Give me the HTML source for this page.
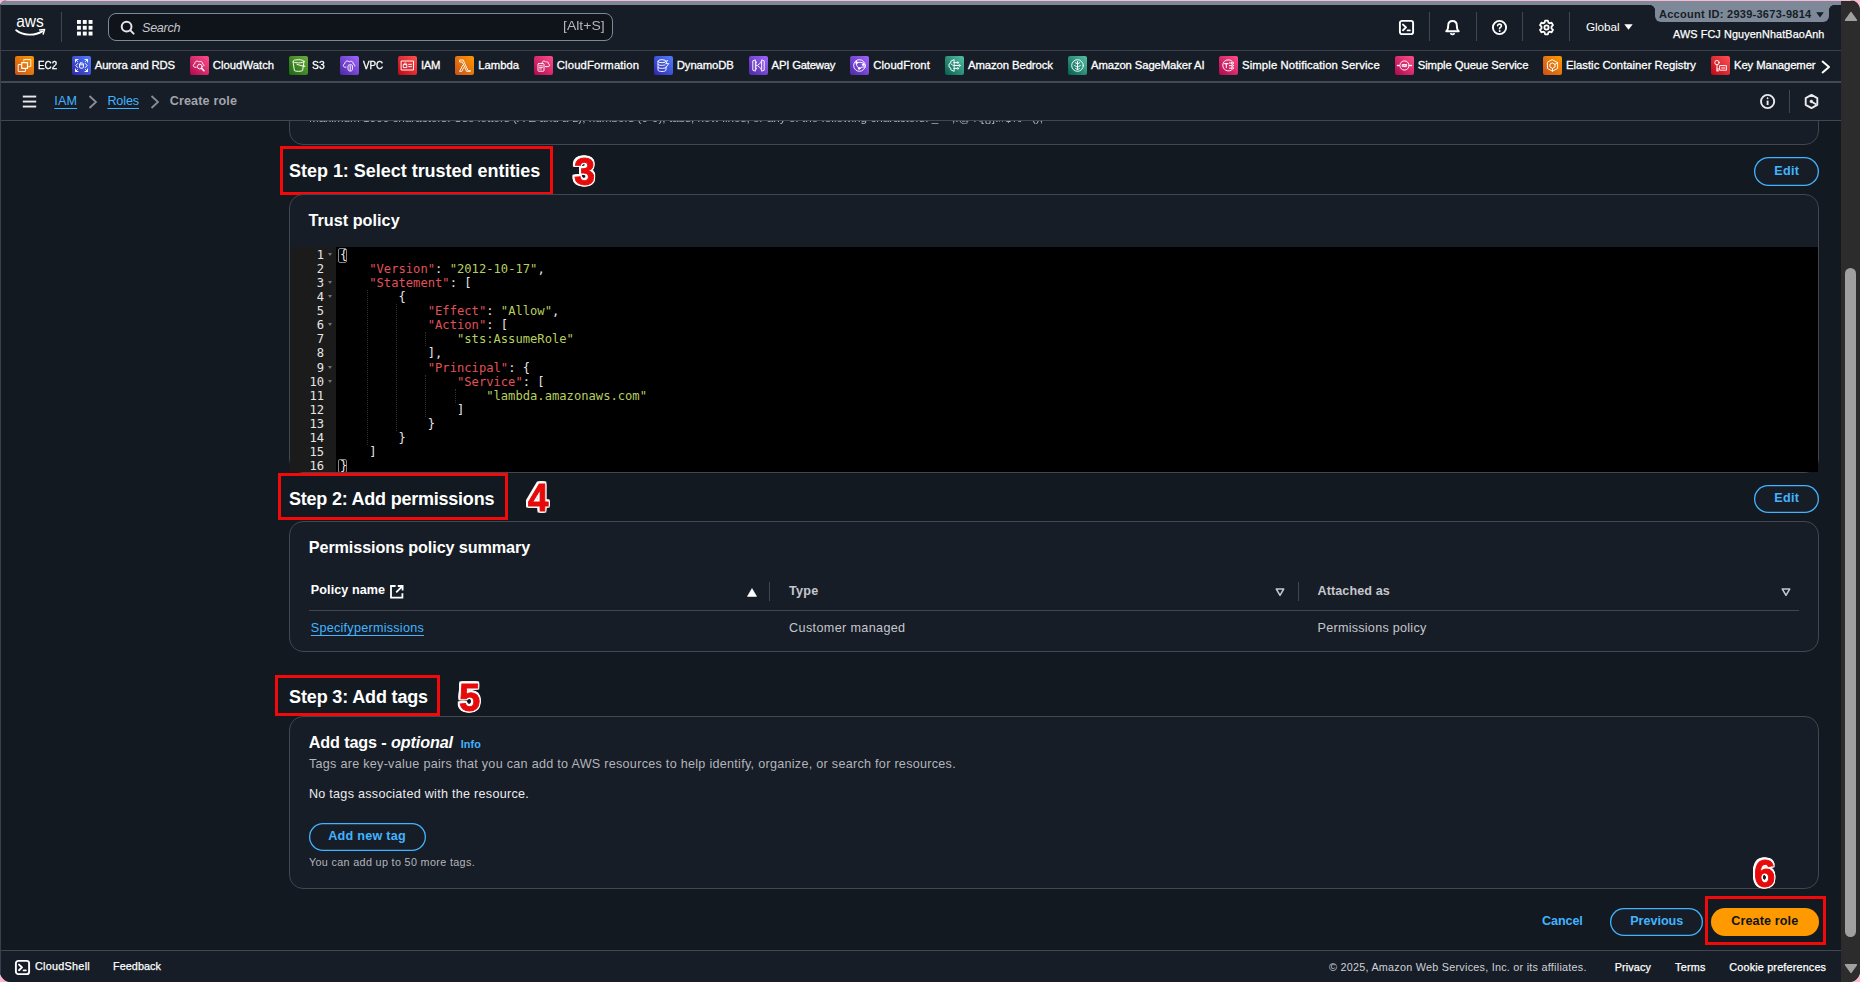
<!DOCTYPE html>
<html lang="en">
<head>
<meta charset="utf-8">
<title>Create role | IAM | Global</title>
<style>
*{box-sizing:border-box;margin:0;padding:0}
html,body{width:1860px;height:982px;overflow:hidden;background:#fab9d2}
body{font-family:"Liberation Sans",sans-serif;font-size:14px;color:#dedee3;position:relative}
.win{position:absolute;left:0;top:0;width:1860px;height:982px;background:#161d26;border-radius:7px 10px 11px 11px;overflow:hidden}
.pinktop{position:absolute;left:0;top:0;width:1860px;height:1px;background:#fab9d2}
.abs{position:absolute}
.t{position:absolute;white-space:nowrap;line-height:1}
/* top strip */
.strip{position:absolute;left:0;top:1px;width:1841px;height:4px;background:#7d8998}
.leftedge{position:absolute;left:0;top:0;width:1px;height:982px;background:#3a3f49}
/* nav */
.nav{position:absolute;left:0;top:5px;width:1841px;height:45px;background:#161d26}
.navline{position:absolute;left:0;width:1841px;height:1px;background:#424650}
.vsep{position:absolute;width:1px;background:#424650}
.search{position:absolute;left:108px;top:8px;width:505px;height:28px;border:1px solid #7d8998;border-radius:8px;background:#0f141a}
.acct{position:absolute;left:1655px;top:0;width:174px;height:17px;background:#7d8998;border-radius:0 0 6px 6px}
/* favorites */
.fav{position:absolute;left:0;top:51px;width:1841px;height:31px;background:#161d26}
.fi{position:absolute;top:5px;width:19px;height:19px;border-radius:2px}
.fl{position:absolute;top:7px;font-size:11.3px;line-height:14px;color:#fff;white-space:nowrap;-webkit-text-stroke:0.3px #fff}
/* breadcrumb */
.bc{position:absolute;left:0;top:83px;width:1841px;height:37px;background:#161d26}
/* main */
.main{position:absolute;left:0;top:121px;width:1841px;height:829px;background:#131920;overflow:hidden}
.card{position:absolute;left:288px;width:1530px;background:#161d26;border:1px solid #424650;border-radius:16px}
.h2{position:absolute;font-weight:bold;font-size:20px;line-height:24px;color:#fff;white-space:nowrap}
.h3{position:absolute;font-weight:bold;font-size:18px;line-height:22px;color:#fff;white-space:nowrap}
.redbox{position:absolute;border:3px solid #f20a0a}
.num{position:absolute;font-family:"DejaVu Sans","Liberation Sans",sans-serif;font-weight:bold;color:#e8080c;-webkit-text-stroke:0;white-space:nowrap}
.btn{position:absolute;border:0 solid #42b4ff;box-shadow:inset 0 0 0 1.3px #42b4ff;border-radius:16px;color:#42b4ff;font-weight:bold;font-size:14px;text-align:center;white-space:nowrap}
/* footer */
.foot{position:absolute;left:0;top:951px;width:1841px;height:31px;background:#161d26}
.ft{position:absolute;top:9.5px;font-size:10.8px;line-height:13px;color:#fff;white-space:nowrap;-webkit-text-stroke:0.25px #fff}
/* scrollbar */
.sb{position:absolute;left:1841px;top:1px;width:19px;height:981px;background:#2c2c2c}
.sbthumb{position:absolute;left:4px;top:267px;width:11px;height:669px;border-radius:6px;background:#a0a0a0}
.lnk{color:#42b4ff;text-decoration:underline;text-underline-offset:3px;text-decoration-thickness:1px}

h2.t,h3.t{margin:0;font-weight:bold}
a{cursor:pointer}
.btn{background:#161d26}
.btn .t{color:#42b4ff;font-weight:bold}
.btn.pri{background:#ff9900;box-shadow:none}
.btn.pri .t{color:#0f141a}
.num{font-family:"Liberation Sans",sans-serif;font-size:39.5px;line-height:1;font-weight:bold;color:#e60a0a;-webkit-text-stroke:0.9px #e60a0a;transform-origin:0 0;filter:drop-shadow(1.2px 0 0 #fff) drop-shadow(-1.2px 0 0 #fff) drop-shadow(0 1.2px 0 #fff) drop-shadow(0 -1.2px 0 #fff)}
.ace{position:absolute;background:#000;overflow:hidden;font-family:"DejaVu Sans Mono","Liberation Mono",monospace;font-size:12.15px;color:#e6e6e6}
.gut{position:absolute;left:0;top:0;width:46px;height:100%;background:#1b1b1b}
.ln{position:absolute;left:0;width:100%;height:14px;line-height:14px;white-space:pre}
.no{position:absolute;left:0;width:34.1px;text-align:right;color:#e6e6e6}
.fold{position:absolute;left:37.8px;top:5.2px;width:0;height:0;border-left:2.8px solid transparent;border-right:2.8px solid transparent;border-top:3.5px solid #747474}
.cl{position:absolute;left:50px;top:0;font:inherit;white-space:pre}
.k{color:#e0525a}
.s{color:#b8cf5e}
.ig{position:absolute;width:0;border-left:1px dotted #303030}
.bm{position:absolute;width:9px;height:14.5px;border:1px solid #888;border-radius:2px}
.acct:before,.acct:after{content:'';position:absolute;top:0;width:5px;height:5px}
.acct:before{left:-5px;background:radial-gradient(circle at 0 100%,rgba(125,137,152,0) 4.6px,#7d8998 5.2px)}
.acct:after{right:-5px;background:radial-gradient(circle at 100% 100%,rgba(125,137,152,0) 4.6px,#7d8998 5.2px)}
#f0{transform:scaleX(0.8733);transform-origin:0 50%}
#f1{letter-spacing:-0.206px}
#f2{letter-spacing:0.037px}
#f3{transform:scaleX(0.9184);transform-origin:0 50%}
#f4{transform:scaleX(0.8694);transform-origin:0 50%}
#f5{letter-spacing:-0.265px}
#f6{letter-spacing:-0.005px}
#f7{letter-spacing:0.137px}
#f8{letter-spacing:-0.096px}
#f9{letter-spacing:-0.203px}
#f10{letter-spacing:0.071px}
#f11{letter-spacing:-0.081px}
#f12{letter-spacing:-0.108px}
#f13{letter-spacing:0.127px}
#f14{letter-spacing:-0.085px}
#f15{letter-spacing:0.001px}
#f16{letter-spacing:-0.107px}
#m-max{transform:scaleX(1.0866);transform-origin:0 50%}
#h-s1{letter-spacing:-0.025px}
#e1{letter-spacing:0.301px}
#h-tp{letter-spacing:0.037px}
#h-s2{letter-spacing:-0.225px}
#e2{letter-spacing:0.301px}
#h-pps{letter-spacing:-0.105px}
#th1{letter-spacing:0.082px}
#th2{letter-spacing:0.208px}
#th3{letter-spacing:0.092px}
#td1{letter-spacing:0.261px}
#td2{letter-spacing:0.362px}
#td3{letter-spacing:0.262px}
#h-s3{letter-spacing:-0.154px}
#h-at{letter-spacing:-0.121px}
#inf{letter-spacing:0.126px}
#p1{letter-spacing:0.280px}
#p2{letter-spacing:0.275px}
#b-add{letter-spacing:0.275px}
#p3{letter-spacing:0.336px}
#a-cancel{letter-spacing:-0.102px}
#b-prev{letter-spacing:-0.013px}
#b-create{letter-spacing:0.126px}
#t-search{letter-spacing:-0.268px}
#t-alts{transform:scaleX(1.1107);transform-origin:0 50%}
#t-global{letter-spacing:-0.102px}
#t-acct{letter-spacing:0.269px}
#t-user{letter-spacing:0.128px}
#b-iam{letter-spacing:0.136px}
#b-roles{letter-spacing:-0.121px}
#b-cur{letter-spacing:0.144px}
#ft-cs{letter-spacing:0.278px}
#ft-fb{letter-spacing:0.072px}
#ft-copy{letter-spacing:0.252px}
#ft-priv{letter-spacing:0.128px}
#ft-terms{letter-spacing:0.242px}
#ft-cookie{letter-spacing:0.182px}
</style>
</head>
<body>
<div class="win">
  <div class="pinktop"></div>
  <div class="strip"></div>

  <!-- ===== top navigation ===== -->
  <header class="nav" id="nav">
    <!-- aws logo -->
    <svg class="abs" style="left:14px;top:10px" width="34" height="24" viewBox="0 0 34 24" aria-label="aws">
      <text x="2.2" y="11.9" font-family="Liberation Sans, sans-serif" font-size="16.5" fill="#fff" textLength="27.6" lengthAdjust="spacingAndGlyphs">aws</text>
      <path d="M2.2 15.2 C9 20.6 20.5 21.2 28.2 16.4" fill="none" stroke="#fff" stroke-width="1.9" stroke-linecap="round"/>
      <path d="M25.6 14.9 L30.6 14.4 L29.2 19" fill="none" stroke="#fff" stroke-width="1.5" stroke-linecap="round" stroke-linejoin="round"/>
    </svg>
    <div class="vsep" style="left:61px;top:7px;height:30px"></div>
    <!-- services grid -->
    <svg class="abs" style="left:77px;top:15px" width="16" height="16" viewBox="0 0 16 16" fill="#fff">
      <rect x="0" y="0" width="3.9" height="3.9"/><rect x="5.8" y="0" width="3.9" height="3.9"/><rect x="11.6" y="0" width="3.9" height="3.9"/>
      <rect x="0" y="5.8" width="3.9" height="3.9"/><rect x="5.8" y="5.8" width="3.9" height="3.9"/><rect x="11.6" y="5.8" width="3.9" height="3.9"/>
      <rect x="0" y="11.6" width="3.9" height="3.9"/><rect x="5.8" y="11.6" width="3.9" height="3.9"/><rect x="11.6" y="11.6" width="3.9" height="3.9"/>
    </svg>
    <!-- search -->
    <div class="search">
      <svg class="abs" style="left:11px;top:6px" width="16" height="16" viewBox="0 0 16 16" fill="none" stroke="#e4e4ea" stroke-width="2" stroke-linecap="round">
        <circle cx="6.6" cy="6.6" r="4.9"/><path d="M10.4 10.4 L13.6 13.6"/>
      </svg>
      <span class="t" id="t-search" style="left:33px;top:7.8px;font-size:12.6px;font-style:italic;color:#c6c6cd">Search</span>
      <span class="t" id="t-alts" style="left:453.7px;top:5.6px;font-size:12.6px;color:#b4b4bb">[Alt+S]</span>
    </div>
    <!-- cloudshell -->
    <svg class="abs" style="left:1398px;top:14px" width="17" height="17" viewBox="0 0 17 17" fill="none" stroke="#fff" stroke-width="1.9" stroke-linecap="round" stroke-linejoin="round">
      <rect x="1.9" y="1.9" width="13.2" height="13.2" rx="2.2"/><path d="M5 5.6 L8 8.4 L5 11.2"/><path d="M9.6 11.4 L11.8 11.4"/>
    </svg>
    <div class="vsep" style="left:1429px;top:7px;height:29px"></div>
    <!-- bell -->
    <svg class="abs" style="left:1444px;top:14px" width="17" height="17" viewBox="0 0 17 17" fill="none" stroke="#fff" stroke-width="1.9" stroke-linecap="round" stroke-linejoin="round">
      <path d="M2.2 12.2 C4.2 10.8 4.2 9 4.2 6.6 C4.2 3.8 6 2 8.5 2 C11 2 12.8 3.8 12.8 6.6 C12.8 9 12.8 10.8 14.8 12.2 Z"/><path d="M7 14.8 C7.6 15.6 9.4 15.6 10 14.8"/>
    </svg>
    <div class="vsep" style="left:1476px;top:7px;height:29px"></div>
    <!-- help -->
    <svg class="abs" style="left:1491px;top:14px" width="17" height="17" viewBox="0 0 17 17" fill="none" stroke="#fff" stroke-width="1.9" stroke-linecap="round" stroke-linejoin="round">
      <circle cx="8.5" cy="8.5" r="6.6"/><path d="M6.6 6.8 C6.6 4.6 10.4 4.6 10.4 6.9 C10.4 8.3 8.5 8.3 8.5 9.8" stroke-width="1.6"/><circle cx="8.5" cy="12" r="0.5" fill="#fff" stroke-width="1"/>
    </svg>
    <div class="vsep" style="left:1522px;top:7px;height:29px"></div>
    <!-- settings -->
    <svg class="abs" style="left:1538px;top:14px" width="17" height="17" viewBox="0 0 17 17" fill="none" stroke="#fff" stroke-width="1.8" stroke-linejoin="round">
      <path d="M7.1 1.6 L9.9 1.6 L10.4 3.6 L11.6 4.3 L13.6 3.7 L15 6.1 L13.5 7.6 L13.5 9.4 L15 10.9 L13.6 13.3 L11.6 12.7 L10.4 13.4 L9.9 15.4 L7.1 15.4 L6.6 13.4 L5.4 12.7 L3.4 13.3 L2 10.9 L3.5 9.4 L3.5 7.6 L2 6.1 L3.4 3.7 L5.4 4.3 L6.6 3.6 Z"/><circle cx="8.5" cy="8.5" r="2.1"/>
    </svg>
    <div class="vsep" style="left:1569px;top:7px;height:29px"></div>
    <span class="t" id="t-global" style="left:1586px;top:17.3px;font-size:11.8px;color:#fff">Global</span>
    <svg class="abs" style="left:1624px;top:19px" width="9" height="6" viewBox="0 0 9 6"><path d="M0.3 0.3 L8.7 0.3 L4.5 5.8 Z" fill="#fff"/></svg>
    <div class="acct">
      <span class="t" id="t-acct" style="left:4px;top:4px;font-size:11px;font-weight:bold;color:#161d26">Account ID: 2939-3673-9814</span>
      <svg class="abs" style="left:161px;top:7px" width="8" height="6" viewBox="0 0 8 6"><path d="M0.2 0.3 L7.8 0.3 L4 5.6 Z" fill="#161d26"/></svg>
    </div>
    <span class="t" id="t-user" style="left:1673px;top:23.66px;font-size:10.8px;color:#fff;-webkit-text-stroke:0.25px #fff">AWS FCJ NguyenNhatBaoAnh</span>
  </header>
  <div class="navline" style="top:50px;background:#3b404a"></div>

  <!-- ===== favorites bar ===== -->
  <nav class="fav" id="fav">
    <svg width="0" height="0" style="position:absolute"><defs>
      <linearGradient id="g-orange" x1="0" y1="1" x2="1" y2="0"><stop offset="0" stop-color="#c8511b"/><stop offset="1" stop-color="#ff9900"/></linearGradient>
      <linearGradient id="g-blue" x1="0" y1="1" x2="1" y2="0"><stop offset="0" stop-color="#2e27ad"/><stop offset="1" stop-color="#527fff"/></linearGradient>
      <linearGradient id="g-pink" x1="0" y1="1" x2="1" y2="0"><stop offset="0" stop-color="#b0084d"/><stop offset="1" stop-color="#ff4f8b"/></linearGradient>
      <linearGradient id="g-green" x1="0" y1="1" x2="1" y2="0"><stop offset="0" stop-color="#1b660f"/><stop offset="1" stop-color="#6cae3e"/></linearGradient>
      <linearGradient id="g-purple" x1="0" y1="1" x2="1" y2="0"><stop offset="0" stop-color="#4d27a8"/><stop offset="1" stop-color="#a166ff"/></linearGradient>
      <linearGradient id="g-red" x1="0" y1="1" x2="1" y2="0"><stop offset="0" stop-color="#bd0816"/><stop offset="1" stop-color="#ff5252"/></linearGradient>
      <linearGradient id="g-teal" x1="0" y1="1" x2="1" y2="0"><stop offset="0" stop-color="#055f4e"/><stop offset="1" stop-color="#56c0a7"/></linearGradient>
    </defs></svg>
    <a class="fi" style="left:15px"><svg width="19" height="19" viewBox="0 0 19 19"><rect width="19" height="19" rx="2" fill="url(#g-orange)"/><g fill="none" stroke="#fff" stroke-width="0.95" stroke-linecap="round" stroke-linejoin="round" stroke-width="0.9"><path d="M8.8 5 V3.6 H15.8 V10.6 H13.6"/><path d="M10.4 13.2 V15.4 H3.2 V8.6 H5.6"/><rect x="6.7" y="6.6" width="5.8" height="5.8" stroke-width="1.2"/></g></svg></a>
    <span class="fl" id="f0" style="left:38px">EC2</span>
    <a class="fi" style="left:72px"><svg width="19" height="19" viewBox="0 0 19 19"><rect width="19" height="19" rx="2" fill="url(#g-blue)"/><g fill="none" stroke="#fff" stroke-width="0.95" stroke-linecap="round" stroke-linejoin="round"><path d="M3.5 6 V3.5 H6 M13 3.5 H15.5 V6 M15.5 13 V15.5 H13 M6 15.5 H3.5 V13 M3.5 3.5 L5.5 5.5 M15.5 3.5 L13.5 5.5 M15.5 15.5 L13.5 13.5 M3.5 15.5 L5.5 13.5"/><path d="M5.6 7.5 L3.8 9.5 L5.6 11.5 M13.4 7.5 L15.2 9.5 L13.4 11.5"/><rect x="7.6" y="7" width="3.8" height="5.2" rx="1.2"/><path d="M7.6 8.8 H11.4"/></g></svg></a>
    <span class="fl" id="f1" style="left:94.8px">Aurora and RDS</span>
    <a class="fi" style="left:190px"><svg width="19" height="19" viewBox="0 0 19 19"><rect width="19" height="19" rx="2" fill="url(#g-pink)"/><g fill="none" stroke="#fff" stroke-width="0.95" stroke-linecap="round" stroke-linejoin="round"><path d="M6.2 11.2 H5 C3 11.2 2.6 8.2 4.8 7.8 C4.6 5.4 7.6 4.2 8.8 6 C10.4 4.6 13 5.8 12.6 8 C13.8 8.2 14.2 9 14 9.8"/><circle cx="9.8" cy="10.6" r="2.4"/><path d="M11.6 12.4 L14 14.8" stroke-width="1.5"/></g></svg></a>
    <span class="fl" id="f2" style="left:212.7px">CloudWatch</span>
    <a class="fi" style="left:289px"><svg width="19" height="19" viewBox="0 0 19 19"><rect width="19" height="19" rx="2" fill="url(#g-green)"/><g fill="none" stroke="#fff" stroke-width="0.95" stroke-linecap="round" stroke-linejoin="round"><path d="M4 5.5 L5.4 14.6 C6.6 15.6 12.4 15.6 13.6 14.6 L15 5.5"/><ellipse cx="9.5" cy="5.3" rx="5.5" ry="1.6"/><path d="M8 8.4 L15.6 10.6 C16.4 10.2 15.4 9.4 14.4 9.4"/></g></svg></a>
    <span class="fl" id="f3" style="left:311.6px">S3</span>
    <a class="fi" style="left:340px"><svg width="19" height="19" viewBox="0 0 19 19"><rect width="19" height="19" rx="2" fill="url(#g-purple)"/><g fill="none" stroke="#fff" stroke-width="0.95" stroke-linecap="round" stroke-linejoin="round"><path d="M6 11.2 H5 C3 11.2 2.6 8.2 4.8 7.8 C4.6 5.2 7.8 4 9.2 6 C10.8 4.4 13.6 5.6 13.2 8 C14.4 8.2 15 9 14.8 10"/><path d="M8 9.6 C8 8.4 12.4 8.4 12.4 9.6 V13.6 C12.4 15.6 8 15.6 8 13.6 Z M10.2 9.8 V14.4"/></g></svg></a>
    <span class="fl" id="f4" style="left:362.6px">VPC</span>
    <a class="fi" style="left:398px"><svg width="19" height="19" viewBox="0 0 19 19"><rect width="19" height="19" rx="2" fill="url(#g-red)"/><g fill="none" stroke="#fff" stroke-width="0.95" stroke-linecap="round" stroke-linejoin="round"><rect x="3.5" y="5" width="12" height="9" /><rect x="5.6" y="8.6" width="3.2" height="3" /><path d="M6.2 8.6 V7.8 C6.2 6.6 8.2 6.6 8.2 7.8 V8.6 M10.6 8.4 H13.4 M10.6 10.6 H13.4"/></g></svg></a>
    <span class="fl" id="f5" style="left:420.9px">IAM</span>
    <a class="fi" style="left:455px"><svg width="19" height="19" viewBox="0 0 19 19"><rect width="19" height="19" rx="2" fill="url(#g-orange)"/><g fill="none" stroke="#fff" stroke-width="0.95" stroke-linecap="round" stroke-linejoin="round"><path d="M5 4 H8.2 L13 14.6 H15.4 V15.4 H11.6 L7.4 6 H5 Z M7.6 9.4 L4.6 15.4 H6.8 L8.6 11.6" stroke-width="0.9"/></g></svg></a>
    <span class="fl" id="f6" style="left:478.3px">Lambda</span>
    <a class="fi" style="left:534px"><svg width="19" height="19" viewBox="0 0 19 19"><rect width="19" height="19" rx="2" fill="url(#g-pink)"/><g fill="none" stroke="#fff" stroke-width="0.95" stroke-linecap="round" stroke-linejoin="round"><path d="M8 7.4 C7.6 5.2 10.4 4.2 11.6 6 C13 5.2 14.8 6.2 14.4 7.8 C16 8 16 10.6 14.2 10.6 H11.4"/><rect x="4" y="7.6" width="6" height="7.6" rx="0.6"/><path d="M5.6 9.8 H8.4 M5.6 11.4 H8.4 M5.6 13 H7.4"/></g></svg></a>
    <span class="fl" id="f7" style="left:556.8px">CloudFormation</span>
    <a class="fi" style="left:654px"><svg width="19" height="19" viewBox="0 0 19 19"><rect width="19" height="19" rx="2" fill="url(#g-blue)"/><g fill="none" stroke="#fff" stroke-width="0.95" stroke-linecap="round" stroke-linejoin="round"><ellipse cx="8" cy="5.2" rx="4" ry="1.5"/><path d="M4 5.2 V14 C4 16 12 16 12 14 V11 M4 8.2 C4 9.8 10 9.8 11 8.8 M4 11.2 C4 12.8 10 12.8 12 11.6"/><path d="M13.4 4.4 L11.8 7.6 H14.8 L12.4 10.8" /></g></svg></a>
    <span class="fl" id="f8" style="left:676.8px">DynamoDB</span>
    <a class="fi" style="left:749px"><svg width="19" height="19" viewBox="0 0 19 19"><rect width="19" height="19" rx="2" fill="url(#g-purple)"/><g fill="none" stroke="#fff" stroke-width="0.95" stroke-linecap="round" stroke-linejoin="round"><path d="M6 4 L3.8 4.8 V14.2 L6 15 Z M13 4 L15.2 4.8 V14.2 L13 15 Z"/><path d="M10.6 7.6 L8.4 9.5 L10.6 11.4" /><path d="M7.4 6 V7 M7.4 9 V10 M7.4 12 V13 M11.8 6 V7 M11.8 12 V13" /></g></svg></a>
    <span class="fl" id="f9" style="left:771.6px">API Gateway</span>
    <a class="fi" style="left:850px"><svg width="19" height="19" viewBox="0 0 19 19"><rect width="19" height="19" rx="2" fill="url(#g-purple)"/><g fill="none" stroke="#fff" stroke-width="0.95" stroke-linecap="round" stroke-linejoin="round"><circle cx="9.5" cy="9.5" r="5.8"/><path d="M6.2 4.8 C5.4 8 7 11 9 12.4 M9 12.4 C11 11 13.6 10.8 15.2 11 M7 6.8 C9.4 5.8 12.4 6.4 14 7.4"/><circle cx="6.8" cy="6.6" r="0.9" fill="#fff"/><circle cx="9.2" cy="12.4" r="0.9" fill="#fff"/><circle cx="13.2" cy="8.6" r="0.9" fill="#fff"/></g></svg></a>
    <span class="fl" id="f10" style="left:873.3px">CloudFront</span>
    <a class="fi" style="left:945px"><svg width="19" height="19" viewBox="0 0 19 19"><rect width="19" height="19" rx="2" fill="url(#g-teal)"/><g fill="none" stroke="#fff" stroke-width="0.95" stroke-linecap="round" stroke-linejoin="round"><path d="M8.8 3.8 L5.8 5.2 V7 L4 8 V11 L5.8 12 V13.8 L8.8 15.2 Z"/><path d="M8.8 6.6 H12 M8.8 9.5 H13.6 M8.8 12.4 H12 M6.4 8.2 L7.6 9.2"/><circle cx="12.8" cy="6.6" r="0.8"/><circle cx="14.4" cy="9.5" r="0.8"/><circle cx="12.8" cy="12.4" r="0.8"/></g></svg></a>
    <span class="fl" id="f11" style="left:968px">Amazon Bedrock</span>
    <a class="fi" style="left:1068px"><svg width="19" height="19" viewBox="0 0 19 19"><rect width="19" height="19" rx="2" fill="url(#g-teal)"/><g fill="none" stroke="#fff" stroke-width="0.95" stroke-linecap="round" stroke-linejoin="round"><circle cx="9.5" cy="9.5" r="5.8"/><path d="M9.5 5.4 V13.6 M7.2 6.6 L9.5 8 L11.8 6.6 M6.6 9.6 L9.5 11.2 L12.4 9.6 M7.6 12.6 L9.5 13.6 L11.4 12.6" stroke-width="0.9"/></g></svg></a>
    <span class="fl" id="f12" style="left:1091px">Amazon SageMaker AI</span>
    <a class="fi" style="left:1219px"><svg width="19" height="19" viewBox="0 0 19 19"><rect width="19" height="19" rx="2" fill="url(#g-pink)"/><g fill="none" stroke="#fff" stroke-width="0.95" stroke-linecap="round" stroke-linejoin="round"><path d="M13 5 C11 3.4 7.6 3.4 5.6 5.2 C3.4 7.2 3.2 10.8 5.2 13 C7 15 10 15.6 12.4 14.2"/><path d="M5.6 7.6 H9 M7.3 7.6 V11.6" stroke-width="1.1"/><circle cx="13.4" cy="7" r="1"/><circle cx="13.4" cy="9.6" r="1"/><circle cx="13.4" cy="12.2" r="1"/><path d="M10.4 7 H12.4 M10.4 9.6 H12.4 M10.4 12.2 H12.4"/></g></svg></a>
    <span class="fl" id="f13" style="left:1242px">Simple Notification Service</span>
    <a class="fi" style="left:1395px"><svg width="19" height="19" viewBox="0 0 19 19"><rect width="19" height="19" rx="2" fill="url(#g-pink)"/><g fill="none" stroke="#fff" stroke-width="0.95" stroke-linecap="round" stroke-linejoin="round"><circle cx="9.5" cy="9.5" r="4.6"/><path d="M7.6 8.6 H11.4 V10.6 H7.6 Z M7.6 8.6 L9.5 9.8 L11.4 8.6"/><path d="M2.6 9.5 H4.4 M14.6 9.5 H16.4"/><circle cx="3" cy="9.5" r="0.6" fill="#fff"/><circle cx="16" cy="9.5" r="0.6" fill="#fff"/></g></svg></a>
    <span class="fl" id="f14" style="left:1417.7px">Simple Queue Service</span>
    <a class="fi" style="left:1543px"><svg width="19" height="19" viewBox="0 0 19 19"><rect width="19" height="19" rx="2" fill="url(#g-orange)"/><g fill="none" stroke="#fff" stroke-width="0.95" stroke-linecap="round" stroke-linejoin="round"><path d="M9.5 3.8 L14.6 6.6 V12.4 L9.5 15.2 L4.4 12.4 V6.6 Z"/><path d="M9.5 7 L12 8.4 V11 L9.5 12.4 L7 11 V8.4 Z M12 8.4 L14.6 6.6 M9.5 12.4 V15.2"/></g></svg></a>
    <span class="fl" id="f15" style="left:1566px">Elastic Container Registry</span>
    <a class="fi" style="left:1711px"><svg width="19" height="19" viewBox="0 0 19 19"><rect width="19" height="19" rx="2" fill="url(#g-red)"/><g fill="none" stroke="#fff" stroke-width="0.95" stroke-linecap="round" stroke-linejoin="round"><circle cx="6" cy="6.6" r="2.2"/><path d="M6 8.8 V15 M6 13 H7.6 M6 14.8 H7.6"/><rect x="9" y="9.6" width="6.4" height="4.6"/><path d="M10.6 12 H13.8" /></g></svg></a>
    <span class="fl" id="f16" style="left:1734px">Key Managemer</span>
    <svg class="abs" style="left:1821px;top:9px" width="10" height="14" viewBox="0 0 10 14" fill="none" stroke="#fff" stroke-width="2" stroke-linecap="round" stroke-linejoin="round"><path d="M1.6 1.6 L8 7 L1.6 12.4"/></svg>
  </nav>
  <div class="navline" style="top:81px;height:2px;background:#434853"></div>

  <!-- ===== breadcrumb bar ===== -->
  <div class="bc" id="bc">
    <!-- hamburger -->
    <svg class="abs" style="left:22px;top:12px" width="15" height="13" viewBox="0 0 15 13" fill="#e9e9ee"><rect x="0.8" y="0.6" width="13.4" height="1.9"/><rect x="0.8" y="5.6" width="13.4" height="1.9"/><rect x="0.8" y="10.6" width="13.4" height="1.9"/></svg>
    <a class="t lnk" id="b-iam" style="left:54.3px;top:12.33px;font-size:12.6px">IAM</a>
    <svg class="abs" style="left:88px;top:11.5px" width="10" height="14" viewBox="0 0 10 14" fill="none" stroke="#8c8c94" stroke-width="1.8" stroke-linejoin="miter"><path d="M1.5 1 L8 7 L1.5 13"/></svg>
    <a class="t lnk" id="b-roles" style="left:107.4px;top:12.33px;font-size:12.6px">Roles</a>
    <svg class="abs" style="left:150px;top:11.5px" width="10" height="14" viewBox="0 0 10 14" fill="none" stroke="#8c8c94" stroke-width="1.8" stroke-linejoin="miter"><path d="M1.5 1 L8 7 L1.5 13"/></svg>
    <span class="t" id="b-cur" style="left:169.7px;top:12.33px;font-size:12.6px;color:#a4a4ad;font-weight:bold">Create role</span>
    <!-- info -->
    <svg class="abs" style="left:1759px;top:10px" width="17" height="17" viewBox="0 0 17 17" fill="none" stroke="#e9e9ee" stroke-width="1.9"><circle cx="8.6" cy="8.5" r="6.6"/><path d="M8.6 7.6 V12" stroke-linecap="butt"/><circle cx="8.6" cy="5.2" r="0.6" fill="#e9e9ee" stroke-width="0.8"/></svg>
    <div class="vsep" style="left:1789px;top:7px;height:23px"></div>
    <!-- amazon q -->
    <svg class="abs" style="left:1803px;top:10px" width="17" height="17" viewBox="0 0 17 17" fill="none" stroke="#e9e9ee" stroke-width="1.9" stroke-linejoin="round"><path d="M8.5 1.9 L14.3 5.2 V11.8 L8.5 15.1 L2.7 11.8 V5.2 Z"/><circle cx="8.3" cy="8.4" r="1.3" fill="#e9e9ee" stroke-width="0.8"/><path d="M8.6 8.7 L13.4 11.6" stroke-width="1.7"/></svg>
  </div>
  <div class="navline" style="top:120px"></div>

  <!-- ===== main content ===== -->
  <main class="main" id="main">
    <section class="card" style="top:-60px;height:84px;left:289px;width:1530px;border-radius:14px"></section>
    <span class="t" id="m-max" style="left:309.0px;top:-8.00px;font-size:10.8px;color:#b4b4bb">Maximum 1000 characters. Use letters (A-Z and a-z), numbers (0-9), tabs, new lines, or any of the following characters: _+=,.@-/\[{}]!#$%^*();</span>
    <div class="redbox" style="left:280px;top:25px;width:273px;height:49px"></div>
    <h2 class="t" id="h-s1" style="left:289.0px;top:40.90px;font-size:18px;font-weight:bold;color:#fff">Step 1: Select trusted entities</h2>
    <span class="num" id="n3" style="left:573.6px;top:31.4px;transform:scaleX(.96)">3</span>
    <a class="btn" style="left:1754px;top:35.7px;width:65.3px;height:29.4px"><span class="t" id="e1" style="left:20.2px;top:8.00px;font-size:12.6px">Edit</span></a>
    <section class="card" style="top:73px;height:279px;left:289px;width:1530px;border-radius:14px"></section>
    <h3 class="t" id="h-tp" style="left:308.4px;top:90.70px;font-size:16.2px;font-weight:bold;color:#fff">Trust policy</h3>
    <div class="ace" style="left:290px;top:126px;width:1528px;height:225px">
      <div class="gut"></div>
      <div class="ln" style="top:1.00px"><span class="no">1</span><i class="fold"></i><code class="cl">{</code></div>
      <div class="ln" style="top:15.00px"><span class="no">2</span><code class="cl">    <span class="k">&quot;Version&quot;</span>: <span class="s">&quot;2012-10-17&quot;</span>,</code></div>
      <div class="ln" style="top:29.00px"><span class="no">3</span><i class="fold"></i><code class="cl">    <span class="k">&quot;Statement&quot;</span>: [</code></div>
      <div class="ln" style="top:43.00px"><span class="no">4</span><i class="fold"></i><code class="cl">        {</code></div>
      <div class="ln" style="top:57.00px"><span class="no">5</span><code class="cl">            <span class="k">&quot;Effect&quot;</span>: <span class="s">&quot;Allow&quot;</span>,</code></div>
      <div class="ln" style="top:71.00px"><span class="no">6</span><i class="fold"></i><code class="cl">            <span class="k">&quot;Action&quot;</span>: [</code></div>
      <div class="ln" style="top:85.00px"><span class="no">7</span><code class="cl">                <span class="s">&quot;sts:AssumeRole&quot;</span></code></div>
      <div class="ln" style="top:99.00px"><span class="no">8</span><code class="cl">            ],</code></div>
      <div class="ln" style="top:114.00px"><span class="no">9</span><i class="fold"></i><code class="cl">            <span class="k">&quot;Principal&quot;</span>: {</code></div>
      <div class="ln" style="top:128.00px"><span class="no">10</span><i class="fold"></i><code class="cl">                <span class="k">&quot;Service&quot;</span>: [</code></div>
      <div class="ln" style="top:142.00px"><span class="no">11</span><code class="cl">                    <span class="s">&quot;lambda.amazonaws.com&quot;</span></code></div>
      <div class="ln" style="top:156.00px"><span class="no">12</span><code class="cl">                ]</code></div>
      <div class="ln" style="top:170.00px"><span class="no">13</span><code class="cl">            }</code></div>
      <div class="ln" style="top:184.00px"><span class="no">14</span><code class="cl">        }</code></div>
      <div class="ln" style="top:198.00px"><span class="no">15</span><code class="cl">    ]</code></div>
      <div class="ln" style="top:212.00px"><span class="no">16</span><code class="cl">}</code></div>
      <i class="ig" style="left:76.9px;top:43.1px;height:154.8px"></i>
      <i class="ig" style="left:106.1px;top:57.1px;height:126.6px"></i>
      <i class="ig" style="left:135.4px;top:85.3px;height:14.1px"></i>
      <i class="ig" style="left:135.4px;top:127.5px;height:42.2px"></i>
      <i class="ig" style="left:164.6px;top:141.6px;height:14.1px"></i>
      <i class="bm" style="left:48px;top:1.1px"></i><i class="bm" style="left:48px;top:211.6px"></i>
    </div>
    <div class="redbox" style="left:278px;top:352px;width:230.4px;height:47px"></div>
    <h2 class="t" id="h-s2" style="left:289.0px;top:369.10px;font-size:18px;font-weight:bold;color:#fff">Step 2: Add permissions</h2>
    <span class="num" id="n4" style="left:527.6px;top:356.6px;transform:scaleX(.93)">4</span>
    <a class="btn" style="left:1754px;top:363.7px;width:65.3px;height:28.6px"><span class="t" id="e2" style="left:20.2px;top:6.90px;font-size:12.6px">Edit</span></a>
    <section class="card" style="top:400px;height:131px;left:289px;width:1530px;border-radius:14px"></section>
    <h3 class="t" id="h-pps" style="left:308.8px;top:418.00px;font-size:16.2px;font-weight:bold;color:#fff">Permissions policy summary</h3>
    <span class="t" id="th1" style="left:310.8px;top:462.70px;font-size:12.6px;font-weight:bold;color:#fff">Policy name</span>
    <svg class="abs" style="left:390px;top:464px" width="14" height="14" viewBox="0 0 14 14" fill="none" stroke="#fff" stroke-width="1.8" stroke-linejoin="miter"><path d="M5.6 1 H1 V12.6 H12.4 V8.2"/><path d="M7.8 1 H12.6 V5.6 M12.4 1.2 L6.2 7.4"/></svg>
    <svg class="abs" style="left:746.5px;top:466.5px" width="10" height="9" viewBox="0 0 10 9"><path d="M5 0.6 L9.6 8.4 H0.4 Z" fill="#fff" stroke="#fff" stroke-width="0.6" stroke-linejoin="round"/></svg>
    <div class="vsep" style="left:769px;top:461px;height:19px"></div>
    <span class="t" id="th2" style="left:789.1px;top:463.60px;font-size:12.6px;font-weight:bold;color:#c6c6cd">Type</span>
    <svg class="abs" style="left:1274.5px;top:467px" width="10" height="9" viewBox="0 0 10 9"><path d="M1.3 1 H8.7 L5 7.4 Z" fill="none" stroke="#c6c6cd" stroke-width="1.5" stroke-linejoin="round"/></svg>
    <div class="vsep" style="left:1298px;top:461px;height:19px"></div>
    <span class="t" id="th3" style="left:1317.5px;top:463.60px;font-size:12.6px;font-weight:bold;color:#c6c6cd">Attached as</span>
    <svg class="abs" style="left:1780.5px;top:467px" width="10" height="9" viewBox="0 0 10 9"><path d="M1.3 1 H8.7 L5 7.4 Z" fill="none" stroke="#c6c6cd" stroke-width="1.5" stroke-linejoin="round"/></svg>
    <div class="abs" style="left:309px;top:489px;width:1490px;height:1px;background:#424650"></div>
    <a class="t lnk" id="td1" style="left:310.8px;top:500.50px;font-size:12.6px;">Specifypermissions</a>
    <span class="t" id="td2" style="left:789.1px;top:500.90px;font-size:12.6px;color:#c6c6cd">Customer managed</span>
    <span class="t" id="td3" style="left:1317.5px;top:500.90px;font-size:12.6px;color:#c6c6cd">Permissions policy</span>
    <div class="redbox" style="left:275px;top:554px;width:165px;height:41px"></div>
    <h2 class="t" id="h-s3" style="left:289.1px;top:566.90px;font-size:18px;font-weight:bold;color:#fff">Step 3: Add tags</h2>
    <span class="num" id="n5" style="left:459px;top:557px;transform:scaleX(.97)">5</span>
    <section class="card" style="top:595px;height:173px;left:289px;width:1530px;border-radius:14px"></section>
    <h3 class="t" id="h-at" style="left:308.7px;top:613.20px;font-size:16.2px;font-weight:bold;color:#fff">Add tags - <i>optional</i></h3>
    <a class="t" id="inf" style="left:460.7px;top:617.80px;font-size:10.8px;font-weight:bold;color:#42b4ff">Info</a>
    <span class="t" id="p1" style="left:308.9px;top:637.00px;font-size:12.6px;color:#b4b4bb">Tags are key-value pairs that you can add to AWS resources to help identify, organize, or search for resources.</span>
    <span class="t" id="p2" style="left:308.9px;top:666.50px;font-size:12.6px;color:#ebebf0">No tags associated with the resource.</span>
    <a class="btn" style="left:309px;top:702.1px;width:117.4px;height:28px"><span class="t" id="b-add" style="left:19.2px;top:6.60px;font-size:12.6px">Add new tag</span></a>
    <span class="t" id="p3" style="left:308.9px;top:735.90px;font-size:10.8px;color:#b4b4bb">You can add up to 50 more tags.</span>
    <span class="num" id="n6" style="left:1754.2px;top:732.6px;transform:scaleX(.97)">6</span>
    <a class="t" id="a-cancel" style="left:1542.0px;top:794.20px;font-size:12.6px;font-weight:bold;color:#42b4ff">Cancel</a>
    <a class="btn" style="left:1609.6px;top:787px;width:93.2px;height:28px"><span class="t" id="b-prev" style="left:20.6px;top:7.20px;font-size:12.6px">Previous</span></a>
    <div class="redbox" style="left:1705px;top:775px;width:121px;height:49px"></div>
    <a class="btn pri" style="left:1710.7px;top:787px;width:108.6px;height:28px"><span class="t" id="b-create" style="left:20.5px;top:7.20px;font-size:12.6px">Create role</span></a>
  </main>

  <!-- ===== footer ===== -->
  <div class="navline" style="top:950px"></div>
  <footer class="foot" id="foot">
    <svg class="abs" style="left:14px;top:8px" width="17" height="17" viewBox="0 0 17 17" fill="none" stroke="#fff" stroke-width="1.9" stroke-linecap="round" stroke-linejoin="round"><rect x="1.9" y="1.9" width="13.2" height="13.2" rx="2.4"/><path d="M5 5.6 L8 8.4 L5 11.2"/><path d="M9.6 11.4 L11.8 11.4"/></svg>
    <span class="ft" id="ft-cs" style="left:35px;top:8.8px">CloudShell</span>
    <span class="ft" id="ft-fb" style="left:113px;top:8.8px">Feedback</span>
    <span class="ft" id="ft-copy" style="left:1329px;color:#d0d0d6;-webkit-text-stroke:0">© 2025, Amazon Web Services, Inc. or its affiliates.</span>
    <a class="ft" id="ft-priv" style="left:1614.7px">Privacy</a>
    <a class="ft" id="ft-terms" style="left:1675px">Terms</a>
    <a class="ft" id="ft-cookie" style="left:1729.3px">Cookie preferences</a>
  </footer>

  <!-- ===== scrollbar ===== -->
  <div class="sb" id="sb">
    <svg class="abs" style="left:3px;top:9.5px" width="14" height="11" viewBox="0 0 14 11"><path d="M7 1.6 L12.4 9.2 H1.6 Z" fill="#a0a0a0" stroke="#a0a0a0" stroke-width="1.6" stroke-linejoin="round"/></svg>
    <div class="sbthumb"></div>
    <svg class="abs" style="left:2.6px;top:962.2px" width="14" height="11" viewBox="0 0 14 11"><path d="M7 9.4 L12.4 1.8 H1.6 Z" fill="#a0a0a0" stroke="#a0a0a0" stroke-width="1.6" stroke-linejoin="round"/></svg>
  </div>
  <div class="leftedge"></div>
</div>
</body>
</html>
